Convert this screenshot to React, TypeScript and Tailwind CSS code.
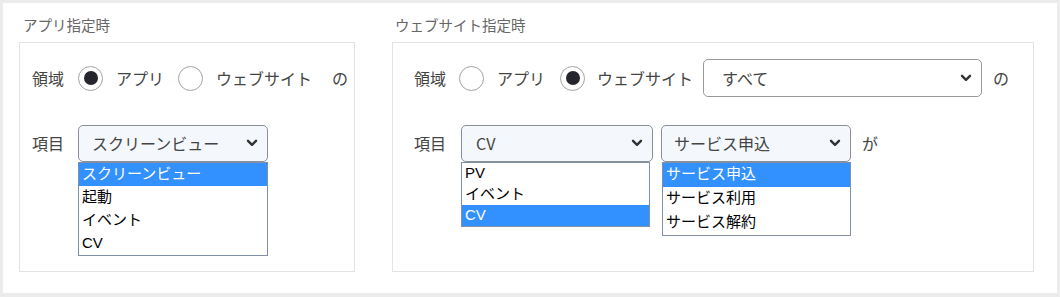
import React from "react";

const jp = "font-['Noto_Sans_CJK_JP','Liberation_Sans',sans-serif]";
const listFont = "font-['Liberation_Sans','Noto_Sans_CJK_JP',sans-serif]";

function Radio({ checked = false }: { checked?: boolean }) {
  return (
    <span className="flex h-[25px] w-[25px] shrink-0 items-center justify-center rounded-full border border-[#a3a3a3] bg-white">
      {checked && <span className="h-[14px] w-[14px] rounded-full bg-[#25252e]" />}
    </span>
  );
}

function Chevron() {
  return (
    <svg width="12" height="8" viewBox="0 0 12 8" className="shrink-0">
      <path d="M2 1.8 L6 5.8 L10 1.8" fill="none" stroke="#333" strokeWidth="2.4" strokeLinecap="round" strokeLinejoin="round" />
    </svg>
  );
}

type DropItem = { label: string; active?: boolean };

function Dropdown({ items, rowH, className }: { items: DropItem[]; rowH: string; className: string }) {
  return (
    <div className={`absolute top-full z-10 border border-[#8190a6] bg-white ${listFont} ${className}`}>
      {items.map((it) => (
        <div
          key={it.label}
          className={`flex items-center px-[3px] text-[15px] ${rowH} ${it.active ? "bg-[#3390ff] text-white" : "text-black"}`}
        >
          {it.label}
        </div>
      ))}
    </div>
  );
}

function Select({
  value,
  className,
  pad,
  focused = true,
  children,
}: {
  value: string;
  className: string;
  pad: string;
  focused?: boolean;
  children?: React.ReactNode;
}) {
  return (
    <div className={`relative shrink-0 ${className}`}>
      <div
        className={`flex h-full items-center justify-between rounded-[5px] border pr-[9px] text-[16px] text-[#444] ${pad} ${
          focused ? "border-[#8a8f96] bg-[#f4f8fd]" : "border-[#9a9a9a] bg-white"
        }`}
      >
        <span>{value}</span>
        <Chevron />
      </div>
      {children}
    </div>
  );
}

function Heading({ text, pad }: { text: string; pad: string }) {
  return <div className={`h-[20px] text-[14.5px] leading-[20px] text-[#666] ${pad}`}>{text}</div>;
}

export default function App() {
  return (
    <div className={`h-[297px] w-[1060px] bg-[#ececec] pb-[4px] pl-[3px] pr-[3px] pt-[3px] ${jp}`}>
      <div className="flex h-full gap-[37px] bg-white pl-[16px] pt-[12px]">
        {/* app */}
        <div className="flex w-[336px] flex-col">
          <Heading text="アプリ指定時" pad="pl-[4px]" />
          <div className="mt-[7px] h-[230px] border border-[#e3e3e3] pl-[12px] pt-[16px] text-[16px] text-[#444]">
            <div className="flex h-[38px] items-center">
              <span>領域</span>
              <span className="ml-[14px]"><Radio checked /></span>
              <span className="ml-[13px]">アプリ</span>
              <span className="ml-[14px]"><Radio /></span>
              <span className="ml-[13px]">ウェブサイト</span>
              <span className="ml-[20px]">の</span>
            </div>
            <div className="mt-[28px] flex h-[36px] items-center">
              <span>項目</span>
              <Select value="スクリーンビュー" pad="pl-[13px]" className="ml-[14px] h-[37px] w-[190px]">
                <Dropdown
                  rowH="h-[23px]"
                  className="left-0 w-[190px]"
                  items={[
                    { label: "スクリーンビュー", active: true },
                    { label: "起動" },
                    { label: "イベント" },
                    { label: "CV" },
                  ]}
                />
              </Select>
            </div>
          </div>
        </div>

        {/* website */}
        <div className="flex w-[642px] flex-col">
          <Heading text="ウェブサイト指定時" pad="pl-[3px]" />
          <div className="mt-[7px] h-[230px] border border-[#e3e3e3] pl-[21px] pt-[16px] text-[16px] text-[#444]">
            <div className="flex h-[38px] items-center">
              <span>領域</span>
              <span className="ml-[13px]"><Radio /></span>
              <span className="ml-[13px]">アプリ</span>
              <span className="ml-[15px]"><Radio checked /></span>
              <span className="ml-[12px]">ウェブサイト</span>
              <Select value="すべて" pad="pl-[18px]" focused={false} className="ml-[10px] h-[38px] w-[279px]" />
              <span className="ml-[11px]">の</span>
            </div>
            <div className="mt-[28px] flex h-[36px] items-center">
              <span>項目</span>
              <Select value="CV" pad="pl-[14px]" className="ml-[15px] h-[37px] w-[192px]">
                <Dropdown
                  rowH="h-[21px]"
                  className="left-0 w-[189px]"
                  items={[{ label: "PV" }, { label: "イベント" }, { label: "CV", active: true }]}
                />
              </Select>
              <Select value="サービス申込" pad="pl-[12px]" className="ml-[8px] h-[37px] w-[190px]">
                <Dropdown
                  rowH="h-[24px]"
                  className="left-[1px] w-[189px]"
                  items={[
                    { label: "サービス申込", active: true },
                    { label: "サービス利用" },
                    { label: "サービス解約" },
                  ]}
                />
              </Select>
              <span className="ml-[11px]">が</span>
            </div>
          </div>
        </div>
      </div>
    </div>
  );
}
